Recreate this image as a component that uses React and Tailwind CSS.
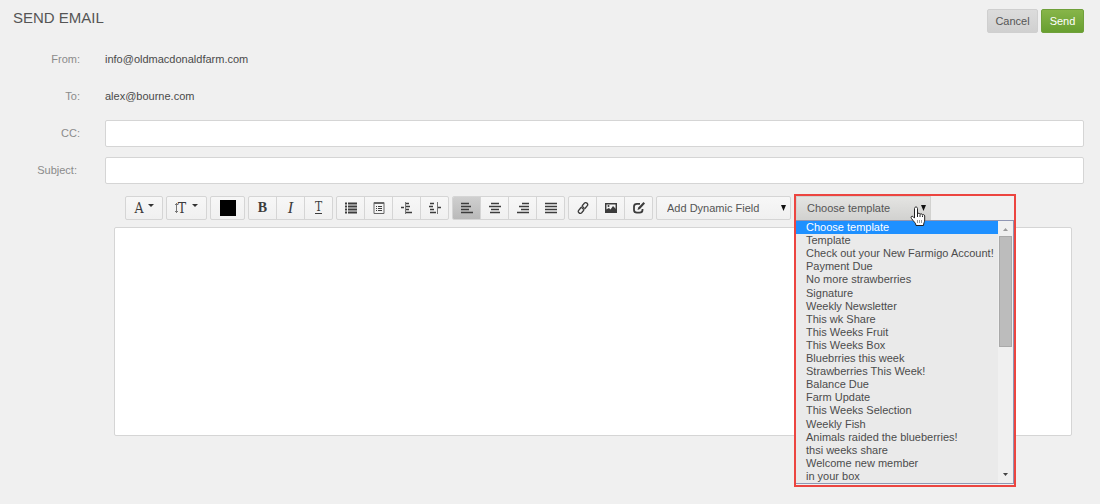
import React, { useState } from 'react';

const templates = [
  'Choose template',
  'Template',
  'Check out your New Farmigo Account!',
  'Payment Due',
  'No more strawberries',
  'Signature',
  'Weekly Newsletter',
  'This wk Share',
  'This Weeks Fruit',
  'This Weeks Box',
  'Bluebrries this week',
  'Strawberries This Week!',
  'Balance Due',
  'Farm Update',
  'This Weeks Selection',
  'Weekly Fish',
  'Animals raided the blueberries!',
  'thsi weeks share',
  'Welcome new member',
  'in your box',
];

const Icon = ({ children }) => (
  <svg width="12" height="12" viewBox="0 0 12 12" fill="none" stroke="#3c3c3c" strokeWidth="1.5" aria-hidden="true">
    {children}
  </svg>
);

const Caret = () => (
  <svg width="6" height="3" viewBox="0 0 6 3" fill="#333" className="mb-1.5" aria-hidden="true">
    <path d="M0 0h6L3 3z" />
  </svg>
);

const SelectArrow = () => (
  <svg width="5" height="6" viewBox="0 0 5 6" fill="#111" aria-hidden="true"><path d="M0 0h5L2.500 6z" /></svg>
);

const alignIcons = [
  { label: 'Align left', d: 'M0 1.5h8M0 4.5h10M0 7.5h8M0 10.5h12' },
  { label: 'Align center', d: 'M2 1.5h8M0 4.5h12M2 7.5h8M1 10.5h10' },
  { label: 'Align right', d: 'M5 1.5h7M2 4.5h10M4 7.5h8M0 10.5h12' },
  { label: 'Justify', d: 'M0 1.5h12M0 4.5h12M0 7.5h12M0 10.5h12' },
];

const Group = ({ children }) => (
  <div className="flex h-6 shrink-0 divide-x divide-[#d5d5d5] overflow-hidden rounded-xs border border-[#d5d5d5] bg-linear-to-b from-[#f7f7f7] to-[#f0f0f0]">
    {children}
  </div>
);

const Tool = ({ label, width = 'w-[27px]', active, onClick, children }) => (
  <button
    type="button"
    aria-label={label}
    onClick={onClick}
    className={`box-content flex items-center justify-center ${width} ${active ? 'bg-linear-to-b from-[#cfcfcf] to-[#b9b9b9]' : ''}`}
  >
    {children}
  </button>
);

const Field = ({ label, htmlFor, children }) => (
  <div className="flex h-[37px] items-center">
    <label htmlFor={htmlFor} className="w-20 shrink-0 text-right text-[#8b8b8b]">{label}</label>
    <div className="ml-[25px] flex flex-1 items-center">{children}</div>
  </div>
);

const inputClass = 'h-[27px] w-full rounded-xs border border-[#d5d5d5] bg-white px-2 outline-none';

const TemplatePicker = () => {
  const [selected, setSelected] = useState('Choose template');

  return (
    <div className="relative z-10 ml-0.5 shrink-0">
      <select
        aria-label="Choose template"
        value={selected}
        onChange={(e) => setSelected(e.target.value)}
        className="block h-6 w-[135px] appearance-none border border-[#d2d2d0] bg-linear-to-b from-[#e4e4e2] to-[#d2d2d0] pl-[10px] text-[#555] outline-none"
      >
        {templates.map((name) => <option key={name}>{name}</option>)}
      </select>
      <span className="pointer-events-none absolute top-[9px] right-[5px]"><SelectArrow /></span>

      {/* open list */}
      <div className="absolute top-6 left-0 flex h-[264px] w-[218px] border-t border-r border-b border-[#8f96b3] bg-[#eaeaea]">
        <ul role="listbox" aria-label="Templates" className="grid flex-1 auto-rows-fr">
          {templates.map((name) => (
            <li
              key={name}
              role="option"
              aria-selected={name === selected}
              onClick={() => setSelected(name)}
              className={`flex items-center pl-[10px] leading-[13px] whitespace-nowrap ${name === selected ? 'bg-[#1e90ff] text-white' : 'text-[#4c4c4c]'}`}
            >
              {name}
            </li>
          ))}
        </ul>
        <div className="flex w-[15px] flex-col items-center bg-[#f0f0f0]">
          <svg width="13" height="15" viewBox="0 0 13 15" fill="#9b9b9b" aria-hidden="true"><path d="M4 10l2.500-3L9 10z" /></svg>
          <div className="h-[111px] w-[13px] border border-[#a9a9a9] bg-[#bcbcbc]" />
          <svg width="13" height="15" viewBox="0 0 13 15" fill="#444" className="mt-auto" aria-hidden="true"><path d="M4 5l2.500 3L9 5z" /></svg>
        </div>
      </div>

      <div className="pointer-events-none absolute -top-0.5 -left-0.5 h-[293px] w-[222px] border-2 border-[#ec4540]" />

      {/* hand pointer */}
      <svg width="16" height="22" viewBox="0 0 16 22" className="pointer-events-none absolute top-2.5 left-[114px]" aria-hidden="true">
        <path
          d="M4.500 2.500c0-2 3-2 3 0V8c.4-1.200 2.400-1 2.600.4.600-1 2.200-.7 2.400.6.700-.8 2.200-.4 2.200 1v4c0 2-1.200 3-1.200 5.500H6C6 17 3.500 15.500 1.500 12.500c-1.200-1.800.4-3 1.700-1.800l1.300 1.400z"
          fill="#fff"
          stroke="#222"
        />
        <path d="M7.500 8v3M10 8.500v2.500M12.500 9.500v1.500" stroke="#222" fill="none" />
        <path d="M7.500 14v3M9.500 14v3M11.500 14v3" stroke="#999" fill="none" />
      </svg>
    </div>
  );
};

const Toolbar = () => {
  const [align, setAlign] = useState('Align left');

  return (
    <div className="ml-[125px] flex gap-[3px] text-[11px]">
      <div className="flex gap-[3px] font-['DejaVu_Serif_Condensed','DejaVu_Serif',serif] text-sm leading-4 text-[#3c3c3c]">
        <Group>
          <Tool label="Font family" width="w-9 gap-1"><span>A</span><Caret /></Tool>
        </Group>
        <Group>
          <Tool label="Font size" width="w-[39px] gap-1.5">
            <span className="flex items-center">
              <svg width="3" height="10" viewBox="0 0 3 10" stroke="#777" aria-hidden="true"><path d="M1.500 0v10M0 1.500h3M0 8.500h3" /></svg>
              T
            </span>
            <Caret />
          </Tool>
        </Group>
        <Group>
          <Tool label="Text color" width="w-[33px]"><span className="size-4 bg-black" /></Tool>
        </Group>
        <Group>
          <Tool label="Bold"><span className="font-['Liberation_Serif',serif] font-bold">B</span></Tool>
          <Tool label="Italic"><i className="font-['Liberation_Serif',serif] text-base leading-4">I</i></Tool>
          <Tool label="Underline"><span className="border-b border-[#3c3c3c] text-xs leading-[11px]">T</span></Tool>
        </Group>
        <Group>
          <Tool label="Bullet list"><Icon><path d="M0 1.500h2M0 4.500h2M0 7.500h2M0 10.500h2M3 1.500h9M3 4.500h9M3 7.500h9M3 10.500h9" strokeWidth="2" /></Icon></Tool>
          <Tool label="Numbered list">
            <Icon><path d="M1 .5h10v11H1zM1 1.500h10" stroke="#666" strokeWidth="1" /><path d="M3 4.500h1M5 4.500h4M3 6.500h1M5 6.500h4M3 8.500h1M5 8.500h4" strokeWidth="1" /></Icon>
          </Tool>
          <Tool label="Outdent"><Icon><path d="M4.500 0v12" stroke="#777" strokeWidth="1" /><path d="M0 5.500h3M5 1.500h3M5 4.500h4M5 7.500h3M5 10.500h6" /></Icon></Tool>
          <Tool label="Indent"><Icon><path d="M8.500 0v12" stroke="#777" strokeWidth="1" /><path d="M9 5.500h3M1 1.500h4M0 4.500h4M1 7.500h4M1 10.500h6" /></Icon></Tool>
        </Group>
        <Group>
          {alignIcons.map(({ label, d }) => (
            <Tool key={label} label={label} active={align === label} onClick={() => setAlign(label)}>
              <Icon><path d={d} /></Icon>
            </Tool>
          ))}
        </Group>
        <Group>
          <Tool label="Insert link">
            <Icon><path d="M5 4l2.500-3c1.500-1 4 .5 3 2.500L8 6.500C7 7.500 5.500 7 5 6M7 8l-2.500 3c-1.500 1-4-.5-3-2.500L4 5.500C5 4.500 6.500 5 7 6" strokeWidth="1.300" /></Icon>
          </Tool>
          <Tool label="Insert image">
            <Icon><path d="M.7 1.700h10.600v8.600H.7z" /><path d="M1 10V7.500L4 6l1.500 1.500L8 4l3 3v3z" fill="#3c3c3c" stroke="none" /><circle cx="3.500" cy="4" r="1" fill="#3c3c3c" stroke="none" /></Icon>
          </Tool>
          <Tool label="Edit source">
            <Icon><path d="M7 1.800H4Q1 1.800 1 4.500v3.500q0 2.700 3 2.700h2.500Q9.500 10.700 9.500 8V7" strokeWidth="1.800" /><path d="M4.500 8l.8-2.500L10.500 0 12 1.500 7 7z" fill="#3c3c3c" stroke="none" /></Icon>
          </Tool>
        </Group>
      </div>
      <div className="relative shrink-0">
        <select
          aria-label="Add Dynamic Field"
          className="block h-6 w-[135px] appearance-none rounded-xs border border-[#d5d5d5] bg-linear-to-b from-[#f7f7f7] to-[#f0f0f0] pl-[10px] text-[#555] outline-none"
        >
          <option>Add Dynamic Field</option>
        </select>
        <span className="pointer-events-none absolute top-[9px] right-[5px]"><SelectArrow /></span>
      </div>
      <TemplatePicker />
    </div>
  );
};

const App = () => (
  <main className="min-h-screen bg-[#f0f0f0] pr-4 pb-4 font-['Liberation_Sans',sans-serif] text-[11px] text-[#4a4a4a]">
    <header className="flex items-start justify-between pt-[9px] pl-[13px]">
      <h1 className="text-[15px] leading-[18px] text-[#555]">SEND EMAIL</h1>
      <div className="flex gap-[3px]">
        <button type="button" className="h-6 min-w-[51px] rounded-xs border border-[#cfcfcf] bg-linear-to-b from-[#dcdcdc] to-[#d0d0d0] px-[7px] text-[#555]">Cancel</button>
        <button type="button" className="h-6 min-w-[43px] rounded-xs border border-[#6fa03a] bg-linear-to-b from-[#87b549] to-[#689f30] px-[7px] text-white">Send</button>
      </div>
    </header>

    <form className="mt-2">
      <Field label="From:"><span>info@oldmacdonaldfarm.com</span></Field>
      <Field label="To:"><span>alex@bourne.com</span></Field>
      <Field label="CC:" htmlFor="cc"><input id="cc" type="text" className={inputClass} /></Field>
      <Field label={'Subject:\u00a0'} htmlFor="subject"><input id="subject" type="text" className={inputClass} /></Field>

      <div className="mt-[7px]"><Toolbar /></div>
      <textarea
        aria-label="Message"
        className="mt-[7px] ml-[114px] block h-[209px] w-[calc(100%-126px)] resize-none rounded-xs border border-[#d5d5d5] bg-white p-2 outline-none"
      />
    </form>
  </main>
);

export default App;
